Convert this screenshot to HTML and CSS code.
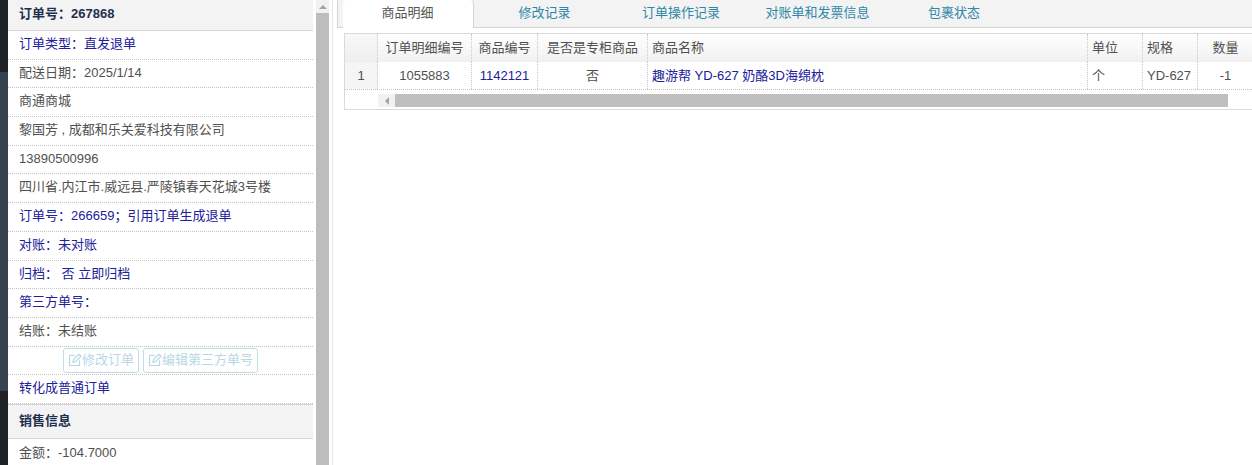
FILE: index.html
```html
<!DOCTYPE html>
<html lang="zh-CN">
<head>
<meta charset="utf-8">
<title>订单详情</title>
<link rel="stylesheet" href="styles.css">
</head>
<body>
<div class="page">
  <div class="edge"><div class="edge-top"></div><div class="edge-mid"></div><div class="edge-bot"></div></div>
  <aside class="side">
    <h3 class="head head-first">订单号：267868</h3>
    <div class="row link">订单类型：直发退单</div>
    <div class="row">配送日期：2025/1/14</div>
    <div class="row">商通商城</div>
    <div class="row">黎国芳 , 成都和乐关爱科技有限公司</div>
    <div class="row">13890500996</div>
    <div class="row">四川省.内江市.威远县.严陵镇春天花城3号楼</div>
    <div class="row link">订单号：266659；引用订单生成退单</div>
    <div class="row link">对账：未对账</div>
    <div class="row link">归档： 否 立即归档</div>
    <div class="row link">第三方单号：</div>
    <div class="row">结账：未结账</div>
    <div class="row row-btns">
      <span class="btn"><svg class="pen" viewBox="0 0 14 14" width="14" height="14"><path d="M11.5 7.5V12.5H1.5V2.5H7M5 9.2 5.5 6.6 11 1.2l2 2L7.5 8.7z" fill="none" stroke="currentColor" stroke-width="1.2"/></svg>修改订单</span>
      <span class="btn"><svg class="pen" viewBox="0 0 14 14" width="14" height="14"><path d="M11.5 7.5V12.5H1.5V2.5H7M5 9.2 5.5 6.6 11 1.2l2 2L7.5 8.7z" fill="none" stroke="currentColor" stroke-width="1.2"/></svg>编辑第三方单号</span>
    </div>
    <div class="row link">转化成普通订单</div>
    <h3 class="head">销售信息</h3>
    <div class="row row-end">金额：-104.7000</div>
  </aside>
  <div class="vscroll">
    <div class="arrow-cell"><span class="arrow-up"></span></div>
    <div class="vthumb"></div>
  </div>
  <main class="main">
    <nav class="tabs">
      <span class="tab tab-on">商品明细</span>
      <span class="tab">修改记录</span>
      <span class="tab">订单操作记录</span>
      <span class="tab">对账单和发票信息</span>
      <span class="tab">包裹状态</span>
    </nav>
    <section class="grid">
      <div class="grid-row grid-head">
        <div class="c c0"></div>
        <div class="c c1">订单明细编号</div>
        <div class="c c2">商品编号</div>
        <div class="c c3">是否是专柜商品</div>
        <div class="c c4 left">商品名称</div>
        <div class="c c5 left">单位</div>
        <div class="c c6 left">规格</div>
        <div class="c c7 last">数量</div>
      </div>
      <div class="grid-row grid-body">
        <div class="c c0 num">1</div>
        <div class="c c1">1055883</div>
        <div class="c c2 link">1142121</div>
        <div class="c c3">否</div>
        <div class="c c4 left link">趣游帮 YD-627 奶酪3D海绵枕</div>
        <div class="c c5 left">个</div>
        <div class="c c6 left">YD-627</div>
        <div class="c c7 last">-1</div>
      </div>
      <div class="hscroll">
        <div class="arrow-left"><span class="arrow-l"></span></div>
        <div class="hthumb"></div>
      </div>
    </section>
  </main>
</div>
</body>
</html>
```
FILE: styles.css
```css
* { box-sizing: border-box; }
html, body { margin: 0; height: 465px; overflow: hidden; background: #fff; }
body { font-family: "Liberation Sans", "Noto Sans CJK SC", sans-serif; font-size: 13px; color: #505050; }
.page { display: flex; height: 465px; overflow: hidden; }
.edge { width: 8px; flex: none; display: flex; flex-direction: column; }
.edge-top { height: 72px; background: #1f2327; }
.edge-mid { height: 319px; background: #36434f; }
.edge-bot { flex: 1; background: #1f2327; }
.side { width: 305px; flex: none; background: #fff; }
.head { margin: 0; height: 35px; line-height: 32px; padding-left: 11px; font-size: 13px; font-weight: bold; color: #1f2f4f; background: #f3f3f3; border-top: 1px solid #d4d4d4; border-bottom: 1px solid #d4d4d4; }
.head-first { height: 31px; line-height: 28px; border-top: 0; }
.row { height: 28.7px; line-height: 26px; padding-left: 11px; border-bottom: 1px dotted #c4c4c4; white-space: nowrap; }
.row-end { line-height: 28px; }
.link { color: #20209a; }
.row-btns { display: flex; justify-content: center; align-items: center; gap: 4px; padding: 0; }
.btn { display: inline-flex; align-items: center; height: 25px; padding: 0 4px; border: 1px solid #c4dde6; border-radius: 3px; color: #b8d8e3; }
.pen { flex: none; }
.vscroll { width: 20px; flex: none; display: flex; flex-direction: column; padding: 0 3px; border-right: 1px solid #e4e4e4; }
.arrow-cell { height: 13px; background: #f1f1f1; display: flex; align-items: center; justify-content: center; }
.arrow-up { width: 0; height: 0; border-left: 4px solid transparent; border-right: 4px solid transparent; border-bottom: 4px solid #a3a3a3; }
.vthumb { flex: 1; background: #bdbdbd; }
.main { flex: 1; min-width: 0; margin-left: 4px; }
.tabs { display: flex; gap: 5.5px; height: 28px; background: #f3f3f3; border-left: 1px solid #d4d4d4; border-bottom: 1px solid #d4d4d4; padding-left: 4.5px; }
.tab { width: 131px; flex: none; height: 27px; line-height: 25px; color: #2f87a8; text-align: center; white-space: nowrap; }
.tab-on { height: 28px; background: #fff; color: #555; border-right: 1px solid #d4d4d4; border-radius: 4px 4px 0 0; }
.grid { margin: 5px 0 0 7px; border: 1px solid #dadada; border-right: 0; height: 77px; }
.grid-row { display: flex; }
.grid-head { height: 28px; background: linear-gradient(#fff, #f1f1f1); }
.grid-body { height: 28px; border-bottom: 1px dotted #c4c4c4; }
.c { height: 100%; line-height: 28px; text-align: center; border-right: 1px dotted #c8c8c8; white-space: nowrap; overflow: hidden; flex: none; }
.grid-body .c { line-height: 27px; }
.left { text-align: left; padding-left: 4px; }
.last { border-right: 0; }
.num { background: #f5f5f5; }
.grid-head .c0 { background: linear-gradient(#f8f8f8, #eee); }
.c0 { width: 33px; }
.c1 { width: 94px; }
.c2 { width: 66px; }
.c3 { width: 110px; }
.c4 { width: 440px; }
.c5 { width: 55px; }
.c6 { width: 55px; }
.c7 { width: 55px; }
.hscroll { display: flex; height: 19px; padding: 4px 0 2px; }
.arrow-left { width: 17px; margin-left: 33px; background: #f1f1f1; display: flex; align-items: center; justify-content: center; }
.arrow-l { width: 0; height: 0; border-top: 4px solid transparent; border-bottom: 4px solid transparent; border-right: 4px solid #a3a3a3; }
.hthumb { width: 833px; background: #bfbfbf; }
```
